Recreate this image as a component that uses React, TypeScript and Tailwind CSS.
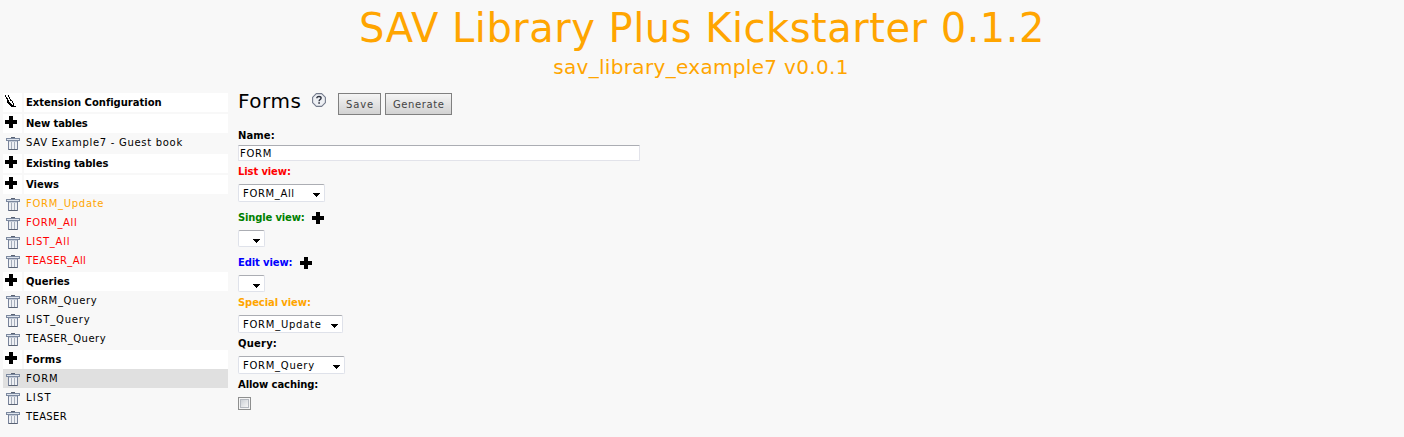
type Entry = { text: string; track: string; color?: string; active?: boolean };
type Group = { title: string; track: string; icon: 'pen' | 'plus'; items: Entry[] };

const GROUPS: Group[] = [
  { title: 'Extension Configuration', track: 'tracking-[-0.02px]', icon: 'pen', items: [] },
  {
    title: 'New tables', track: 'tracking-[-0.1px]', icon: 'plus',
    items: [{ text: 'SAV Example7 - Guest book', track: 'tracking-[0.7px]' }],
  },
  { title: 'Existing tables', track: 'tracking-[-0.08px]', icon: 'plus', items: [] },
  {
    title: 'Views', track: 'tracking-[0px]', icon: 'plus',
    items: [
      { text: 'FORM_Update', track: 'tracking-[0.71px]', color: 'text-[#ffa500]' },
      { text: 'FORM_All', track: 'tracking-[0.58px]', color: 'text-[#ff0000]' },
      { text: 'LIST_All', track: 'tracking-[0.72px]', color: 'text-[#ff0000]' },
      { text: 'TEASER_All', track: 'tracking-[0.4px]', color: 'text-[#ff0000]' },
    ],
  },
  {
    title: 'Queries', track: 'tracking-[0.05px]', icon: 'plus',
    items: [
      { text: 'FORM_Query', track: 'tracking-[0.68px]' },
      { text: 'LIST_Query', track: 'tracking-[0.8px]' },
      { text: 'TEASER_Query', track: 'tracking-[0.48px]' },
    ],
  },
  {
    title: 'Forms', track: 'tracking-[0.2px]', icon: 'plus',
    items: [
      { text: 'FORM', track: 'tracking-[0.8px]', active: true },
      { text: 'LIST', track: 'tracking-[1.2px]' },
      { text: 'TEASER', track: 'tracking-[0.35px]' },
    ],
  },
];

function Plus() {
  return (
    <svg width="12" height="12" viewBox="0 0 12 12" shapeRendering="crispEdges" className="block shrink-0">
      <path d="M4 0h4v4h4v4H8v4H4V8H0V4h4z" fill="#000" />
    </svg>
  );
}

function Pen() {
  return (
    <svg width="12" height="13" viewBox="0 0 12 13" shapeRendering="crispEdges" className="block shrink-0">
      <path
        d="M0 0h1v2H0zM1 2h1v2H1zM2 3h1v2H2zM3 0h1v2H3zM4 2h1v2H4zM2 5h2v3H2zM5 4h1v2H5zM6 5h1v1H6zM7 6h1v2H7zM3 8h2v1H3zM4 9h2v1H4zM5 10h2v1H5zM6 11h3v1H6zM4 7h1v1H4zM5 8h1v1H5zM6 9h1v1H6zM7 10h2v1H7zM8 8h1v3H8zM9 11h2v1H9z"
        fill="#000"
      />
    </svg>
  );
}

function Trash() {
  return (
    <svg width="14" height="13" viewBox="0 0 14 13" shapeRendering="crispEdges" className="block shrink-0">
      <path d="M5 0h4v1H5z" fill="#596273" />
      <path d="M0 1h14v3H0z" fill="#7c899f" />
      <path d="M1 2h12v1H1z" fill="#dfe5ee" />
      <path d="M2 4h10v8H2z" fill="#eef0f4" />
      <path d="M2 4h1v9H2zM11 4h1v9h-1z" fill="#78839a" />
      <path d="M5 5h1v7H5zM8 5h1v7H8z" fill="#a5adbb" />
      <path d="M3 4h8v1H3z" fill="#c3cad6" />
      <path d="M3 12h8v1H3z" fill="#596273" />
    </svg>
  );
}

function Help() {
  return (
    <svg width="14" height="14" viewBox="0 0 14 14" className="mt-[2px] block shrink-0">
      <path d="M4.3 0.6h5.4l3.7 3.7v5.4l-3.7 3.7H4.3L0.6 9.7V4.3z" fill="#eef0f4" stroke="#747b8c" strokeWidth="1.1" strokeLinejoin="round" />
      <path d="M4.9 5.3V4.6Q5.1 3.5 7 3.5Q9.1 3.5 9.1 5.1Q9.1 6.1 8 6.7Q7.1 7.2 7.1 8.3" fill="none" stroke="#2e3340" strokeWidth="1.4" />
      <path d="M6.3 9.2h1.6v1.5H6.3z" fill="#2e3340" />
    </svg>
  );
}

function Sidebar() {
  return (
    <nav className="ml-[3px] w-[225px] shrink-0">
      {GROUPS.map((g) => (
        <div key={g.title} className="mb-[2px]">
          <div className="flex h-[19px] gap-[2px]">
            <div className="w-[19px] bg-white pt-[2px] pl-[2px]">{g.icon === 'pen' ? <Pen /> : <Plus />}</div>
            <div className={`flex-1 bg-white pt-[3px] pl-[2px] font-bold ${g.track}`}>{g.title}</div>
          </div>
          {g.items.map((i) => (
            <div key={i.text} className={`flex h-[19px] pl-[3px] ${i.active ? 'bg-[#e0e0e0]' : ''}`}>
              <div className="w-[20px] pt-[4px]"><Trash /></div>
              <div className={`pt-[3px] ${i.track} ${i.color ?? 'text-black'}`}>{i.text}</div>
            </div>
          ))}
        </div>
      ))}
    </nav>
  );
}

function Label({ text, className, plus }: { text: string; className: string; plus?: boolean }) {
  return (
    <div className={`flex h-[13px] font-bold ${className}`}>
      <span>{text}</span>
      {plus && <div className="ml-auto pt-px"><Plus /></div>}
    </div>
  );
}

function Select({ text, className }: { text?: string; className: string }) {
  return (
    <div className={`flex items-start justify-between rounded-[2px] border border-[#dfe2ea] border-t-[#abadb3] bg-white pr-[4px] pl-[4px] ${className}`}>
      <span className="pt-[2px]">{text}</span>
      <svg width="7" height="4" viewBox="0 0 7 4" shapeRendering="crispEdges" className="mt-[8px] block shrink-0">
        <path d="M0 0h7v1H6v1H5v1H4v1H3V3H2V2H1V1H0z" fill="#000" />
      </svg>
    </div>
  );
}

const BUTTON = 'h-[22px] border border-[#808080] bg-linear-to-b from-[#f5f5f5] to-[#d2d2d2] text-[#444] text-left leading-[13px]';

export default function App() {
  return (
    <div className="h-[437px] w-[1404px] overflow-hidden bg-[#f8f8f8] font-['DejaVu_Sans',Verdana,sans-serif] text-[10px] leading-[13px] whitespace-nowrap text-black">
      <header className="h-[93px] text-center text-[#ffa500]">
        <h1 className="h-[54px] pt-[4px] text-[40px] leading-[48px] tracking-[0.5px]">SAV Library Plus Kickstarter 0.1.2</h1>
        <h2 className="pr-[2px] text-[20px] leading-[26px] tracking-[0.33px]">sav_library_example7 v0.0.1</h2>
      </header>
      <div className="flex">
        <Sidebar />
        <main className="ml-[10px] w-[402px]">
          <div className="flex h-[36px] items-start">
            <h3 className="-mt-[4px] w-[74px] text-[20px] leading-[24px] tracking-[0.5px]">Forms</h3>
            <div className="-mt-[3px] w-[26px] pt-px"><Help /></div>
            <button className={`w-[43px] pl-[7px] tracking-[0.9px] ${BUTTON}`}>Save</button>
            <button className={`ml-[4px] w-[67px] pl-[7px] tracking-[0.6px] ${BUTTON}`}>Generate</button>
          </div>
          <Label text="Name:" className="tracking-[0.1px]" />
          <div className="mt-[3px] h-[16px] w-[402px] rounded-[1px] border border-[#e2e3ea] border-t-[#abadb3] bg-white pl-px leading-[15px] tracking-[0.7px]">FORM</div>
          <Label text="List view:" className="mt-[4px] tracking-[-0.12px] text-[#ff0000]" />
          <Select text="FORM_All" className="mt-[6px] h-[18px] w-[87px] tracking-[0.65px]" />
          <Label text="Single view:" className="mt-[9px] w-[86px] tracking-[-0.17px] text-[#008000]" plus />
          <Select className="mt-[6px] h-[17px] w-[27px]" />
          <Label text="Edit view:" className="mt-[9px] w-[74px] tracking-[-0.12px] text-[#0000ff]" plus />
          <Select className="mt-[6px] h-[17px] w-[27px]" />
          <Label text="Special view:" className="mt-[4px] tracking-[-0.1px] text-[#ffa500]" />
          <Select text="FORM_Update" className="mt-[6px] h-[18px] w-[105px] tracking-[0.74px]" />
          <Label text="Query:" className="mt-[4px] tracking-[0.2px]" />
          <Select text="FORM_Query" className="mt-[6px] h-[18px] w-[107px] tracking-[0.72px]" />
          <Label text="Allow caching:" className="mt-[4px] tracking-[-0.1px]" />
          <div className="mt-[6px] size-[13px] border border-[#8e8f8f] bg-[#f4f4f4] p-px">
            <div className="size-full border border-[#b4b8bf] bg-linear-to-br from-[#cdd1d6] to-[#f6f6f6]" />
          </div>
        </main>
      </div>
    </div>
  );
}
